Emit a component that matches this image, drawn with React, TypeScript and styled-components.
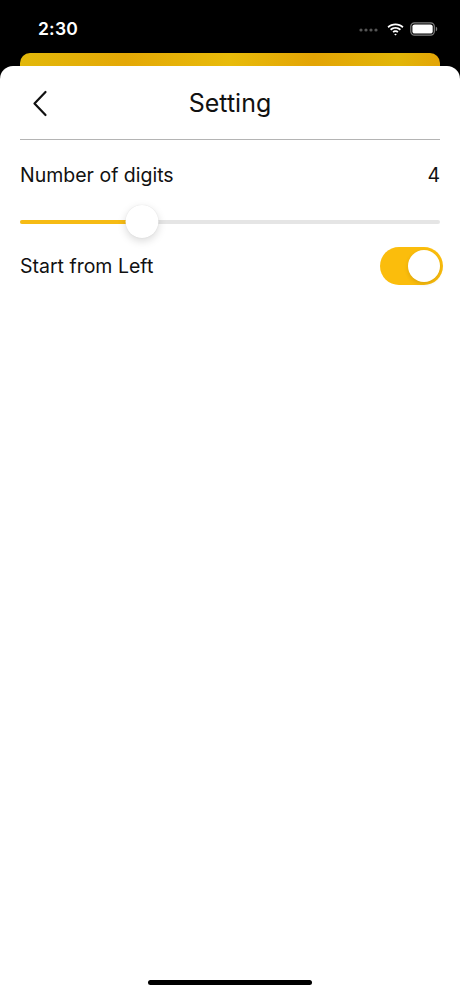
import React, { useState } from "react";
import styled, { createGlobalStyle } from "styled-components";

const GlobalStyle = createGlobalStyle`
  html, body {
    margin: 0;
    padding: 0;
    background: #000;
  }
  body {
    font-family: Inter, "Noto Sans", "Liberation Sans", sans-serif;
    -webkit-font-smoothing: antialiased;
  }
`;

const Screen = styled.div`
  width: 460px;
  height: 995px;
  background: #000;
  display: flex;
  flex-direction: column;
  overflow: hidden;
`;

const StatusBar = styled.div`
  height: 53px;
  display: flex;
  align-items: flex-start;
  justify-content: space-between;
  padding: 18px 22px 0 38px;
  box-sizing: border-box;
  flex-shrink: 0;
`;

const Clock = styled.span`
  color: #fff;
  font-size: 17.5px;
  font-weight: 600;
  letter-spacing: 0.2px;
  line-height: 22px;
`;

const StatusIcons = styled.div`
  display: flex;
  align-items: center;
  gap: 6px;
  height: 22px;
`;

const BehindCard = styled.div`
  margin: 0 20px;
  height: 20px;
  border-radius: 10px 10px 0 0;
  background: linear-gradient(90deg, #e2b80a 0%, #e4a806 25%, #e8bb0a 50%, #e3a405 70%, #e2b608 90%, #e3a406 100%);
  flex-shrink: 0;
`;

const Sheet = styled.div`
  flex: 1;
  margin-top: -7px;
  background: #fff;
  border-radius: 13px 13px 0 0;
  display: flex;
  flex-direction: column;
  padding: 0 20px;
  position: relative;
`;

const Header = styled.div`
  height: 73px;
  display: flex;
  align-items: center;
  justify-content: center;
  position: relative;
  border-bottom: 1.5px solid #b4b4b4;
`;

const BackButton = styled.button`
  position: absolute;
  left: 8px;
  top: 24px;
  background: none;
  border: none;
  padding: 0;
  width: 24px;
  height: 28px;
  cursor: pointer;
`;

const Title = styled.h1`
  margin: 0;
  font-size: 25px;
  font-weight: 400;
  color: #111;
  padding-top: 1px;
`;

const Row = styled.div`
  display: flex;
  align-items: center;
  justify-content: space-between;
`;

const Label = styled.span`
  font-size: 19.5px;
  color: #111;
`;

const DigitsRow = styled(Row)`
  margin-top: 22px;
  height: 26px;
`;

const SliderWrap = styled.div`
  position: relative;
  height: 36px;
  margin-top: 16px;
  display: flex;
  align-items: center;
`;

const Track = styled.div`
  width: 100%;
  height: 4px;
  border-radius: 2px;
  background: #e5e5e5;
  overflow: hidden;
`;

const Fill = styled.div`
  height: 100%;
  background: #f6bb14;
`;

const Thumb = styled.div`
  position: absolute;
  top: 1px;
  width: 33px;
  height: 33px;
  border-radius: 50%;
  background: #fff;
  box-shadow: 0 3px 8px rgba(0, 0, 0, 0.15), 0 0 1px rgba(0, 0, 0, 0.12);
  transform: translateX(-50%);
`;

const LeftRow = styled(Row)`
  margin-top: 7px;
  height: 38px;
`;

const Switch = styled.button<{ $on: boolean }>`
  width: 63px;
  height: 38px;
  margin-right: -3px;
  border-radius: 19px;
  border: none;
  padding: 0;
  background: ${(p) => (p.$on ? "#fbbd0c" : "#e5e5ea")};
  position: relative;
  cursor: pointer;
`;

const Knob = styled.span<{ $on: boolean }>`
  position: absolute;
  top: 3px;
  left: ${(p) => (p.$on ? "28px" : "3px")};
  width: 32px;
  height: 32px;
  border-radius: 50%;
  background: #fff;
  box-shadow: 0 2px 4px rgba(0, 0, 0, 0.12);
`;

const HomeIndicator = styled.div`
  position: absolute;
  bottom: 10px;
  left: 50%;
  transform: translateX(-50%);
  width: 164px;
  height: 5px;
  border-radius: 3px;
  background: #000;
`;

export default function App() {
  const [digits] = useState(4);
  const [fromLeft, setFromLeft] = useState(true);
  const pct = 29;

  return (
    <>
      <GlobalStyle />
      <Screen>
        <StatusBar>
          <Clock>2:30</Clock>
          <StatusIcons>
            <svg width="22" height="10" viewBox="0 0 22 10">
              {[2, 7, 12, 17].map((x) => (
                <circle key={x} cx={x} cy="6" r="1.6" fill="#555" />
              ))}
            </svg>
            <svg width="17" height="13" viewBox="0 0 17 13">
              <path d="M8.5 2.2c2.6 0 5 1 6.8 2.7l1.2-1.3C14.4 1.6 11.6.4 8.5.4S2.6 1.6.5 3.6l1.2 1.3C3.5 3.2 5.9 2.2 8.5 2.2z" fill="#fff" />
              <path d="M8.5 5.7c1.6 0 3.1.6 4.3 1.7L14 6.1c-1.5-1.4-3.4-2.2-5.5-2.2S4.5 4.7 3 6.1l1.2 1.3c1.2-1.1 2.7-1.7 4.3-1.7z" fill="#fff" />
              <path d="M8.5 9.1c.7 0 1.3.3 1.8.7l1.2-1.3c-.8-.7-1.9-1.2-3-1.2s-2.2.5-3 1.2l1.2 1.3c.5-.4 1.1-.7 1.8-.7zM8.5 12.6l1.3-1.4c-.3-.3-.8-.5-1.3-.5s-1 .2-1.3.5z" fill="#fff" />
            </svg>
            <svg width="28" height="14" viewBox="0 0 28 14">
              <rect x="0.8" y="0.8" width="23.5" height="12.4" rx="3.6" fill="none" stroke="#fff" strokeOpacity="0.5" strokeWidth="1.2" />
              <rect x="2.4" y="2.4" width="20.3" height="9.2" rx="2.2" fill="#fff" />
              <path d="M25.8 4.8c.9.3 1.4 1.1 1.4 2.2s-.5 1.9-1.4 2.2z" fill="#fff" fillOpacity="0.5" />
            </svg>
          </StatusIcons>
        </StatusBar>
        <BehindCard />
        <Sheet>
          <Header>
            <BackButton aria-label="Back">
              <svg width="16" height="28" viewBox="0 0 16 28">
                <path d="M13.5 2 L2.5 13.5 L13.5 25" fill="none" stroke="#111" strokeWidth="2.2" strokeLinecap="round" strokeLinejoin="round" />
              </svg>
            </BackButton>
            <Title>Setting</Title>
          </Header>
          <DigitsRow>
            <Label>Number of digits</Label>
            <Label>{digits}</Label>
          </DigitsRow>
          <SliderWrap>
            <Track>
              <Fill style={{ width: `${pct}%` }} />
            </Track>
            <Thumb style={{ left: `${pct}%` }} />
          </SliderWrap>
          <LeftRow>
            <Label>Start from Left</Label>
            <Switch $on={fromLeft} onClick={() => setFromLeft(!fromLeft)} aria-label="Start from Left">
              <Knob $on={fromLeft} />
            </Switch>
          </LeftRow>
          <HomeIndicator />
        </Sheet>
      </Screen>
    </>
  );
}
